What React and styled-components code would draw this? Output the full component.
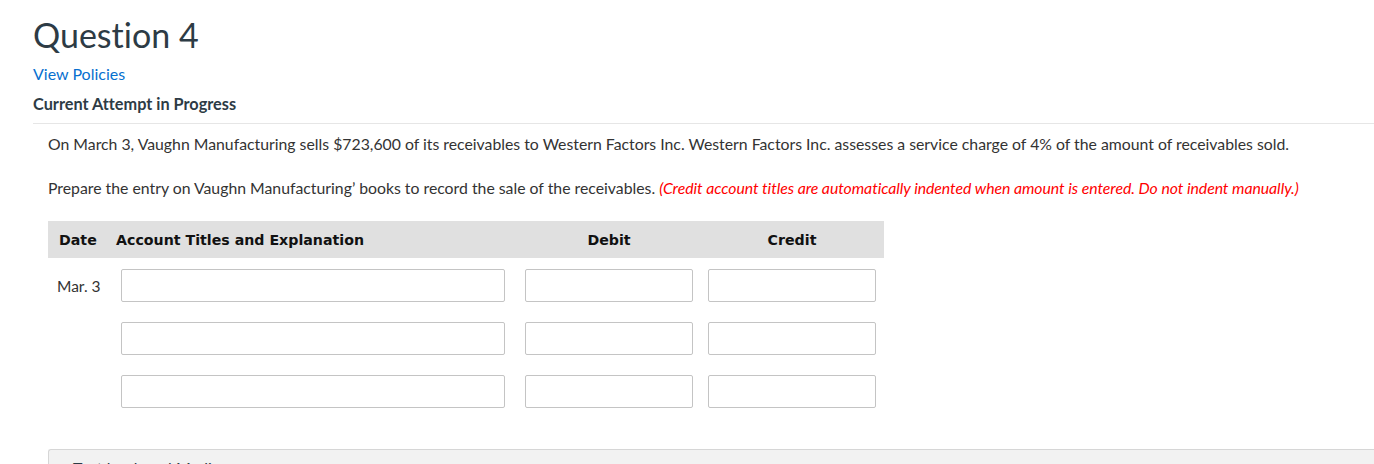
import React from "react";
import styled, { createGlobalStyle } from "styled-components";

const Global = createGlobalStyle`
  html, body { margin: 0; padding: 0; background: #fff; }
  body {
    font-family: Lato, "Open Sans", sans-serif;
    color: #2d3b45;
    overflow: hidden;
    font-variant-ligatures: none;
  }
  * { box-sizing: border-box; }
`;

const Page = styled.div`
  padding: 13px 0 0 33px;
  width: 1374px;
  height: 464px;
  overflow: hidden;
`;

const Title = styled.h1`
  margin: 0;
  font-size: 34px;
  font-weight: 400;
  line-height: 44px;
  color: #2d3b45;
`;

const PolicyLink = styled.a`
  display: block;
  margin-top: 7px;
  font-size: 16px;
  line-height: 20px;
  color: #0770cf;
  text-decoration: none;
`;

const Status = styled.div`
  margin-top: 10px;
  font-size: 16.3px;
  line-height: 20px;
  font-weight: 700;
  color: #2d3b45;
`;

const Divider = styled.hr`
  margin: 9px 0 0 0;
  border: 0;
  border-top: 1px solid #e6e6e6;
`;

const Body = styled.div`
  padding-left: 15px;
`;

const Para = styled.p`
  margin: ${(p) => p.$top}px 0 0 0;
  font-size: 15.8px;
  line-height: 20px;
  color: #333;
`;

const Note = styled.span`
  color: #ff0000;
  font-style: italic;
  letter-spacing: -0.05px;
`;

const Table = styled.div`
  margin-top: 23px;
  width: 836px;
`;

const HeaderRow = styled.div`
  display: grid;
  grid-template-columns: 68px 409px 168px 15px 168px;
  height: 37px;
  align-items: center;
  background: #e0e0e0;
  font-family: "DejaVu Sans", Verdana, sans-serif;
  font-weight: 700;
  font-size: 14.2px;
  color: #111;
`;

const HeadCell = styled.div`
  grid-column: ${(p) => p.$col};
  padding-left: ${(p) => p.$pad || 0}px;
  text-align: ${(p) => p.$align || "left"};
`;

const Row = styled.div`
  display: grid;
  grid-template-columns: 73px 384px 20px 168px 15px 168px;
  align-items: center;
  margin-top: ${(p) => p.$top}px;
`;

const DateCell = styled.div`
  padding-left: 9px;
  font-size: 15.5px;
  color: #333;
`;

const Field = styled.input`
  grid-column: ${(p) => p.$col};
  height: 33px;
  width: 100%;
  border: 1px solid #c4c4c4;
  border-radius: 2px;
  background: #fff;
  font-family: Lato, sans-serif;
  font-size: 15px;
  padding: 0 6px;
  outline: none;
`;

const Panel = styled.div`
  margin-top: 41px;
  margin-right: -33px;
  height: 40px;
  background: #f2f2f2;
  border-top: 1px solid #d6d6d6;
  border-left: 1px solid #d6d6d6;
  border-top-left-radius: 3px;
  padding: 8px 0 0 24px;
  font-size: 16px;
  color: #2d3b45;
`;

const rows = [
  { date: "Mar. 3", top: 11 },
  { date: "", top: 20 },
  { date: "", top: 20 },
];

export default function App() {
  return (
    <Page>
      <Global />
      <Title>Question 4</Title>
      <PolicyLink href="#">View Policies</PolicyLink>
      <Status>Current Attempt in Progress</Status>
      <Divider />
      <Body>
        <Para $top={10}>
          On March 3, Vaughn Manufacturing sells $723,600 of its receivables to Western Factors Inc. Western Factors Inc. assesses a service charge of 4% of the amount of receivables sold.
        </Para>
        <Para $top={24}>
          Prepare the entry on Vaughn Manufacturing’ books to record the sale of the receivables.{" "}
          <Note>(Credit account titles are automatically indented when amount is entered. Do not indent manually.)</Note>
        </Para>
        <Table>
          <HeaderRow>
            <HeadCell $col={1} $pad={11}>Date</HeadCell>
            <HeadCell $col={2}>Account Titles and Explanation</HeadCell>
            <HeadCell $col={3} $align="center">Debit</HeadCell>
            <HeadCell $col={5} $align="center">Credit</HeadCell>
          </HeaderRow>
          {rows.map((r, i) => (
            <Row key={i} $top={r.top}>
              <DateCell>{r.date}</DateCell>
              <Field $col={2} aria-label="Account title" />
              <Field $col={4} aria-label="Debit" />
              <Field $col={6} aria-label="Credit" />
            </Row>
          ))}
        </Table>
        <Panel>Text book and Media</Panel>
      </Body>
    </Page>
  );
}
